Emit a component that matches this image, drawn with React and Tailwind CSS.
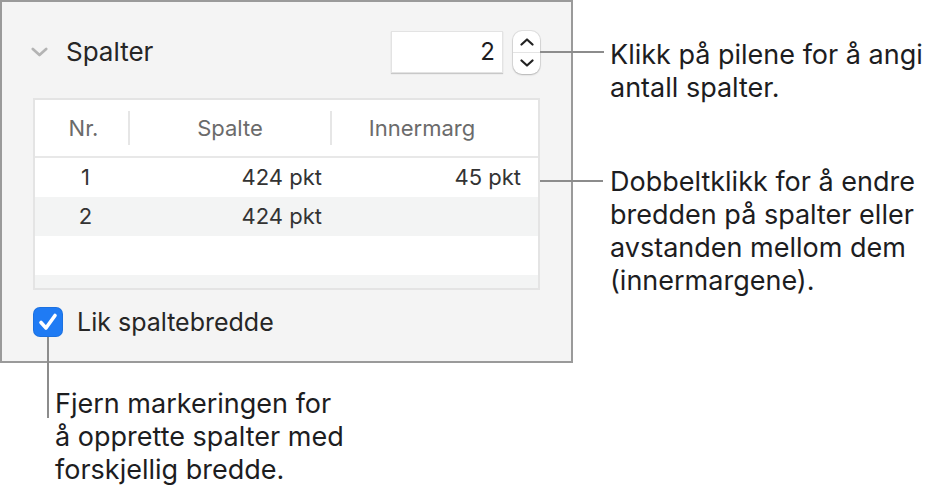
import React from "react";

function Chevron({ down = true, className = "" }) {
  return (
    <svg viewBox="0 0 14 8" className={className} fill="none">
      <path
        d={down ? "M1.5 1.5 L7 6.5 L12.5 1.5" : "M1.5 6.5 L7 1.5 L12.5 6.5"}
        stroke="currentColor"
        strokeWidth="2.2"
        strokeLinecap="round"
        strokeLinejoin="round"
      />
    </svg>
  );
}

const rows = [
  { nr: "1", spalte: "424 pkt", marg: "45 pkt" },
  { nr: "2", spalte: "424 pkt", marg: "" },
  { nr: "", spalte: "", marg: "" },
];

export default function App() {
  return (
    <div className="relative w-[934px] h-[500px] bg-white font-['Inter',sans-serif] overflow-hidden">
      <div className="flex">
        {/* inspector panel */}
        <div className="w-[573px] h-[363px] shrink-0 border-2 border-[#9a9a9a] bg-[#f4f4f4] pt-[29px] px-[31px]">
          <div className="flex items-center h-[42px]">
            <Chevron className="w-[17px] h-[10px] -ml-[2px] text-[#b4b4b4]" />
            <span className="ml-[18px] text-[26px] text-[#262626] leading-none">Spalter</span>
            <div className="ml-auto w-[112px] h-[42px] bg-white border border-[#e3e3e3] shadow-[0_1px_1px_rgba(0,0,0,0.18)] flex items-center justify-end pr-[7px] text-[24px] text-[#1d1d1f]">
              2
            </div>
            <div className="ml-[10px] w-[27px] h-[43px] bg-white rounded-[9px] shadow-[0_0_0_1px_rgba(0,0,0,0.08),0_1px_2px_rgba(0,0,0,0.2)] flex flex-col items-center justify-center text-[#222]">
              <Chevron down={false} className="w-[14px] h-[8px]" />
              <div className="w-full h-px bg-[#e4e4e4] my-[6px]" />
              <Chevron className="w-[14px] h-[8px]" />
            </div>
          </div>

          {/* table */}
          <div className="mt-[25px] h-[192px] border-2 border-[#e4e4e4] bg-[#f3f4f4] overflow-hidden">
            <div className="flex h-[58px] bg-white items-center text-[22px] text-[#6b6b6b] border-b-2 border-[#e8e8e8]">
              <div className="w-[93px] text-center pl-[4px]">Nr.</div>
              <div className="w-[202px] h-[34px] border-l-2 border-[#e6e6e6] flex items-center justify-center">Spalte</div>
              <div className="flex-1 h-[34px] border-l-2 border-[#e6e6e6] flex items-center justify-center pr-[26px]">Innermarg</div>
            </div>
            {rows.map((r, i) => (
              <div
                key={i}
                className={`flex h-[39px] items-center text-[22px] text-[#333] ${i % 2 === 0 ? "bg-white" : "bg-[#f3f4f4]"}`}
              >
                <div className="w-[93px] text-center pl-[8px]">{r.nr}</div>
                <div className="w-[202px] text-right pr-[8px]">{r.spalte}</div>
                <div className="flex-1 text-right pr-[17px]">{r.marg}</div>
              </div>
            ))}
          </div>

          {/* checkbox */}
          <div className="mt-[17px] flex items-center">
            <div className="w-[30px] h-[30px] rounded-[7px] bg-[#1f7bf4] shadow-[inset_0_0_0_1px_rgba(0,0,0,0.08)] flex items-center justify-center">
              <svg viewBox="0 0 24 24" className="w-[24px] h-[24px]" fill="none">
                <path d="M5 12.5 L10 18 L19 5.5" stroke="white" strokeWidth="3.6" strokeLinecap="round" strokeLinejoin="round" />
              </svg>
            </div>
            <span className="ml-[14px] text-[25px] text-[#262626] leading-none">Lik spaltebredde</span>
          </div>
        </div>

        {/* right callouts */}
        <div className="ml-[37px] pt-[38px] flex flex-col text-[27px] leading-[33px] text-[#1d1d1f]">
          <p>
            Klikk på pilene for å angi
            <br />
            antall spalter.
          </p>
          <p className="mt-[61px]">
            Dobbeltklikk for å endre
            <br />
            bredden på spalter eller
            <br />
            avstanden mellom dem
            <br />
            (innermargene).
          </p>
        </div>
      </div>

      <p className="ml-[55px] mt-[24px] text-[27px] leading-[33px] text-[#1d1d1f]">
        Fjern markeringen for
        <br />
        å opprette spalter med
        <br />
        forskjellig bredde.
      </p>

      {/* leader lines */}
      <div className="absolute left-[540px] top-[51px] w-[64px] h-[2px] bg-[#8c8c8c]" />
      <div className="absolute left-[540px] top-[180px] w-[63px] h-[2px] bg-[#8c8c8c]" />
      <div className="absolute left-[47px] top-[337px] w-[2px] h-[81px] bg-[#8c8c8c]" />
    </div>
  );
}
